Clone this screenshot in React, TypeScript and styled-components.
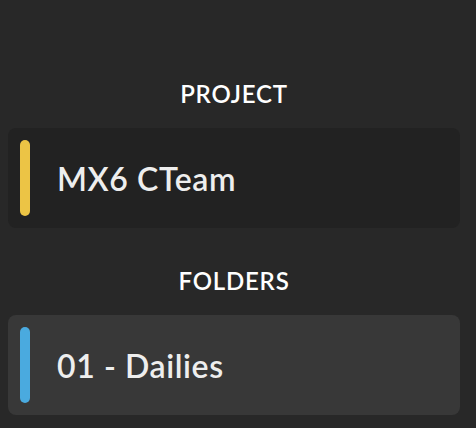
import React from "react";
import styled, { createGlobalStyle } from "styled-components";

const Global = createGlobalStyle`
  html, body { margin: 0; padding: 0; background: #282828; }
  body { font-family: Lato, "Noto Sans", sans-serif; color: #f2f2f2; }
`;

const Page = styled.div`
  width: 476px;
  height: 428px;
  box-sizing: border-box;
  padding: 77px 16px 0 8px;
  display: flex;
  flex-direction: column;
  background: #282828;
`;

const Section = styled.section`
  display: flex;
  flex-direction: column;
  gap: 17px;
  & + & { margin-top: 36px; }
`;

const Heading = styled.h2`
  margin: 0;
  height: 34px;
  line-height: 34px;
  text-align: center;
  font-size: 24px;
  font-weight: 600;
  letter-spacing: 0.8px;
  color: #ffffff;
`;

const Card = styled.div<{ $bg: string }>`
  height: 100px;
  box-sizing: border-box;
  border-radius: 8px;
  background: ${(p) => p.$bg};
  display: flex;
  align-items: center;
  padding: 0 12px;
  gap: 27px;
`;

const Bar = styled.div<{ $color: string }>`
  width: 10px;
  height: 76px;
  border-radius: 5px;
  background: ${(p) => p.$color};
  flex-shrink: 0;
`;

const Label = styled.span`
  font-size: 32px;
  font-weight: 600;
  letter-spacing: 0.6px;
  color: #eeeeee;
`;

export default function App() {
  return (
    <>
      <Global />
      <Page>
        <Section>
          <Heading>PROJECT</Heading>
          <Card $bg="#222222">
            <Bar $color="#ecc445" />
            <Label>MX6 CTeam</Label>
          </Card>
        </Section>
        <Section>
          <Heading>FOLDERS</Heading>
          <Card $bg="#383838">
            <Bar $color="#4aaadf" />
            <Label>01 - Dailies</Label>
          </Card>
        </Section>
      </Page>
    </>
  );
}
